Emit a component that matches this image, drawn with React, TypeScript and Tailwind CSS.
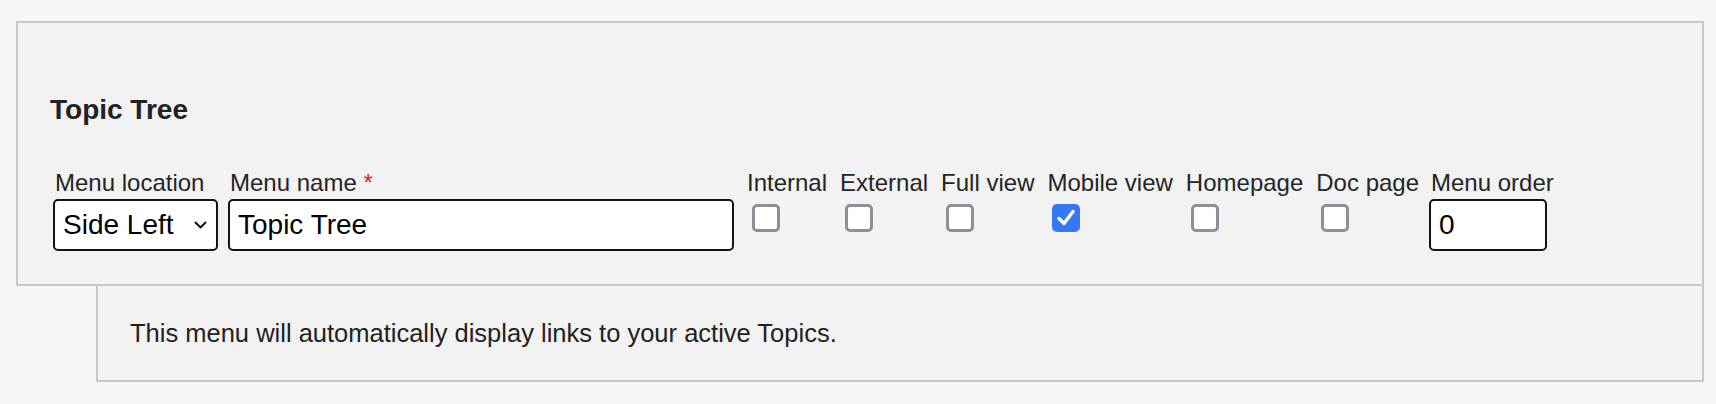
import { useState } from "react";

/* ===== Petits composants de formulaire ===== */
function CheckField({ label, checked, onToggle }: { label: string; checked: boolean; onToggle: () => void }) {
  return (
    <div className="flex flex-col">
      <span className="text-[24px] leading-[28px] text-[#252525] whitespace-nowrap">{label}</span>
      <button
        type="button"
        onClick={onToggle}
        className={
          checked
            ? "mt-[7px] ml-[5px] flex h-[28px] w-[28px] items-center justify-center rounded-[5px] bg-[#3478f6]"
            : "mt-[7px] ml-[5px] h-[28px] w-[28px] rounded-[5px] border-[3px] border-[#8f8e99] bg-white"
        }
        aria-pressed={checked}
      >
        {checked && (
          <svg width="24" height="24" viewBox="0 0 24 24" fill="none">
            <path d="M5 12.5 L10 17.5 L19 5.5" stroke="#fff" strokeWidth="3.5" strokeLinecap="round" strokeLinejoin="round" />
          </svg>
        )}
      </button>
    </div>
  );
}

export default function App() {
  const [menuName, setMenuName] = useState("Topic Tree");
  const [order, setOrder] = useState("0");
  const [flags, setFlags] = useState<{ [k: string]: boolean }>({
    Internal: false,
    External: false,
    "Full view": false,
    "Mobile view": true,
    Homepage: false,
    "Doc page": false,
  });

  const toggle = (k: string) => setFlags((prev) => ({ ...prev, [k]: !prev[k] }));

  return (
    <div className="min-h-screen bg-[#f6f6f6] pt-[21px] pl-[16px] pr-[12px] font-['Liberation_Sans',Arial,sans-serif]">
      {/* Bloc principal */}
      <section className="border-2 border-[#c8c8c8] bg-[#f2f2f2] pl-[32px] pr-4 pt-[71px] pb-[33px]">
        <h3 className="m-0 text-[28px] leading-[32px] font-bold text-[#222]">Topic Tree</h3>

        <div className="mt-[43px] flex items-start pl-[3px]">
          {/* Menu location */}
          <div className="flex flex-col">
            <span className="pl-[2px] text-[24px] leading-[28px] text-[#252525] whitespace-nowrap">Menu location</span>
            <div className="mt-[2px] flex h-[52px] w-[165px] items-center justify-between rounded-[5px] border-2 border-[#151515] bg-white pl-[8px] pr-[9px]">
              <span className="text-[28px] leading-none text-black">Side Left</span>
              <svg width="13" height="9" viewBox="0 0 13 9" fill="none">
                <path d="M1.5 1.5 L6.5 6.5 L11.5 1.5" stroke="#111" strokeWidth="2" strokeLinecap="round" strokeLinejoin="round" />
              </svg>
            </div>
          </div>

          {/* Menu name */}
          <div className="ml-[10px] flex flex-col">
            <span className="pl-[2px] text-[24px] leading-[28px] text-[#252525] whitespace-nowrap">
              Menu name <span className="text-[#e0261e]">*</span>
            </span>
            <input
              value={menuName}
              onChange={(e) => setMenuName(e.target.value)}
              className="mt-[2px] h-[52px] w-[506px] rounded-[5px] border-2 border-[#151515] bg-white px-[8px] text-[28px] text-black outline-none"
            />
          </div>

          {/* Cases à cocher */}
          <div className="ml-[13px] flex gap-[13px]">
            {Object.keys(flags).map((k) => (
              <CheckField key={k} label={k} checked={flags[k]} onToggle={() => toggle(k)} />
            ))}
          </div>

          {/* Menu order */}
          <div className="ml-[10px] flex flex-col">
            <span className="pl-[2px] text-[24px] leading-[28px] text-[#252525] whitespace-nowrap">Menu order</span>
            <input
              value={order}
              onChange={(e) => setOrder(e.target.value)}
              className="mt-[2px] h-[52px] w-[118px] rounded-[5px] border-2 border-[#151515] bg-white px-[8px] text-[28px] text-black outline-none"
            />
          </div>
        </div>
      </section>

      {/* Bloc d'info */}
      <div className="ml-[80px] border-2 border-t-0 border-[#c8c8c8] bg-[#f2f2f2] pl-[32px] pt-[32px] pb-[32px]">
        <p className="m-0 text-[25.5px] leading-[30px] text-[#222]">
          This menu will automatically display links to your active Topics.
        </p>
      </div>
    </div>
  );
}
